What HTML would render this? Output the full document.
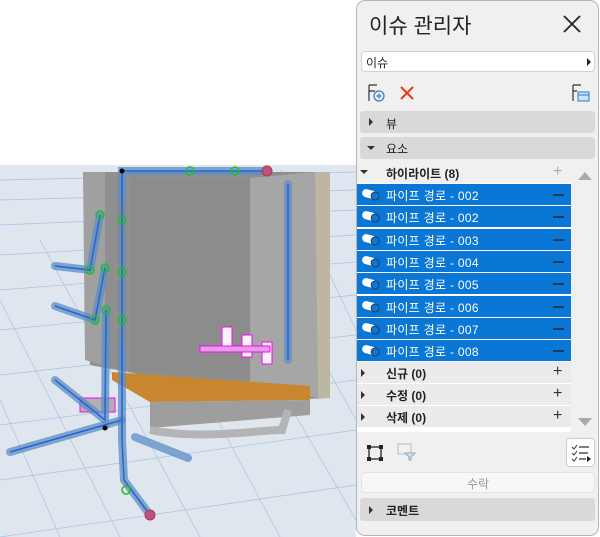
<!DOCTYPE html>
<html><head><meta charset="utf-8"><style>
*{margin:0;padding:0;box-sizing:border-box}
body{width:600px;height:537px;overflow:hidden;position:relative;background:#fff;font-family:"Liberation Sans","Noto Sans CJK KR",sans-serif}
.abs{position:absolute}
#panel{left:356px;top:0;width:243px;height:536px;background:#f0f0f0;border:1px solid #b5b5b5;border-radius:9px}
.t{position:absolute;white-space:nowrap}
.hdr{position:absolute;left:360px;width:235px;background:#d9d9d9;border-radius:3px;height:22px;font-size:12px;color:#222}
.row{position:absolute;left:357px;width:214px;height:21px;background:#0a77d6;color:#fff;font-size:12px}
.row .n{position:absolute;left:29px;top:3px;letter-spacing:.3px}
.row .m{position:absolute;left:196px;top:10px;width:11px;height:2px;background:#1d3c5c}
.pi{position:absolute;left:5px;top:6px;width:15px;height:8px;background:#fff;border-radius:4px;transform:rotate(15deg)}
.pi:after{content:"";position:absolute;right:-3px;top:0;width:7px;height:7px;border:1.5px solid #1d3c5c;border-radius:50%;background:#0a77d6}
.g{position:absolute;left:357px;width:214px;height:21px;background:#ebebeb;font-size:12px;font-weight:bold;color:#222}
.plus{position:absolute;left:196px;top:4px;font-size:16px;font-weight:normal;line-height:12px;color:#333}
.tri{position:absolute;width:0;height:0}
</style></head><body>
<svg class="abs" style="left:0;top:0" width="356" height="537">
<rect x="0" y="165" width="356" height="372" fill="#dfe6ee"/>
<g stroke="#a9c0e6" stroke-width="0.7" fill="none">
<path d="M0 180 L356 172 M0 200 L356 190 M0 225 L356 210 M0 255 L356 235 M0 290 L356 262 M0 330 L356 295 M0 375 L356 335 M0 425 L356 380 M0 480 L356 430 M0 537 L356 485"/>
<path d="M0 300 L120 537 M40 240 L200 537 M100 200 L280 537 M160 180 L356 520 M220 175 L356 420 M0 400 L60 537 M280 170 L356 330"/>
</g>
<polygon points="83,172 330,172 330,398 280,400 90,365" fill="#8f8f8f"/>
<polygon points="83,172 105,172 105,366 85,360" fill="#a0a0a0"/>
<polygon points="130,178 250,178 250,380 130,372" fill="#8c8c8c"/>
<polygon points="250,178 315,172 318,398 250,390" fill="#a6a6a6"/>
<polygon points="315,172 330,172 330,398 318,398" fill="#bdb6a3"/>
<polygon points="112,372 310,386 310,400 150,402 112,380" fill="#c8862f"/>
<polygon points="150,402 310,400 310,415 150,428" fill="#9e9e9e"/>
<path d="M150 430 C200 440 260 430 282 430 L288 410" stroke="#b4b4b8" stroke-width="8" fill="none"/>
<rect x="222" y="327" width="10" height="22" fill="#f4f4f4" stroke="#f0f" stroke-width="1"/>
<rect x="242" y="335" width="10" height="22" fill="#f4f4f4" stroke="#f0f" stroke-width="1"/>
<rect x="262" y="342" width="10" height="22" fill="#f4f4f4" stroke="#f0f" stroke-width="1"/>
<rect x="200" y="346" width="70" height="6" fill="#e0a0e0" stroke="#f0f" stroke-width="1"/>
<rect x="80" y="398" width="35" height="14" fill="#b0b0b0" stroke="#f0f" stroke-width="1"/>
<g stroke="#c88a3a" stroke-width="7"><path d="M122 200 V340"/></g>
<g stroke="#5a8fc6" stroke-opacity="0.75" stroke-width="8" fill="none" stroke-linecap="round">
<path d="M267 171 H122 V440 L124 480 L150 515"/>
<path d="M122 420 L10 452"/>
<path d="M135 437 L188 458"/>
<path d="M100 215 L90 270 L55 266"/>
<path d="M105 268 L95 320 L55 306"/>
<path d="M106 310 L105 420 L55 380"/>
<path d="M288 184 V360"/>
</g>
<g stroke="#2f5fd0" stroke-width="1.5" fill="none">
<path d="M267 171 H122 V440 L124 480 L150 515 M122 420 L10 452 M100 215 L90 270 L55 266 M105 268 L95 320 L55 306 M106 310 L105 420 L55 380 M288 184 V360"/>
</g>
<g fill="none" stroke="#1fc21f" stroke-width="1.5">
<circle cx="100" cy="215" r="4"/><circle cx="90" cy="270" r="4"/><circle cx="105" cy="268" r="4"/><circle cx="95" cy="320" r="4"/><circle cx="106" cy="310" r="4"/><circle cx="122" cy="220" r="4"/><circle cx="122" cy="272" r="4"/><circle cx="122" cy="320" r="4"/><circle cx="235" cy="171" r="4"/><circle cx="190" cy="171" r="4"/><circle cx="126" cy="490" r="4"/>
</g>
<circle cx="267" cy="171" r="5" fill="#c05080" stroke="#a04040"/>
<circle cx="150" cy="515" r="5" fill="#c05080" stroke="#a04040"/>
<circle cx="122" cy="171" r="2.5" fill="#000"/><circle cx="105" cy="428" r="2.5" fill="#000"/>
<rect x="0" y="0" width="356" height="165" fill="#fff"/>
</svg>

<div class="abs" id="panel"></div>
<div class="t" style="left:369px;top:10px;font-size:21px;color:#222">이슈 관리자</div>
<svg class="abs" style="left:562px;top:14px" width="20" height="20"><path d="M2 2L18 18M18 2L2 18" stroke="#222" stroke-width="1.8"/></svg>
<div class="abs" style="left:361px;top:51px;width:234px;height:21px;background:#fff;border:1px solid #d2d2d2;border-radius:4px"></div>
<div class="t" style="left:366px;top:54px;font-size:12px;color:#222">이슈</div>
<div class="tri" style="left:587px;top:58px;border-left:4px solid #222;border-top:4px solid transparent;border-bottom:4px solid transparent"></div>
<svg class="abs" style="left:367px;top:83px" width="20" height="20"><path d="M2 2V18M2 2H10M2 8H8" stroke="#333" stroke-width="1.2" fill="none"/><circle cx="12" cy="13" r="5" fill="none" stroke="#2a7ad0" stroke-width="1.2"/><path d="M9.5 13H14.5M12 10.5V15.5" stroke="#2a7ad0" stroke-width="1.2"/></svg>
<svg class="abs" style="left:400px;top:86px" width="14" height="14"><path d="M1 1L13 13M13 1L1 13" stroke="#e8381c" stroke-width="2"/></svg>
<svg class="abs" style="left:571px;top:83px" width="20" height="20"><path d="M2 2V18M2 2H10M2 8H6" stroke="#333" stroke-width="1.2" fill="none"/><rect x="7" y="9" width="11" height="9" fill="#cfe3f7" stroke="#2a7ad0"/><path d="M7 12H18" stroke="#2a7ad0"/></svg>

<div class="hdr" style="top:111px"><div class="tri" style="left:9px;top:7px;border-left:4px solid #333;border-top:4px solid transparent;border-bottom:4px solid transparent"></div><span class="t" style="left:26px;top:4px">뷰</span></div>
<div class="hdr" style="top:137px"><div class="tri" style="left:7px;top:9px;border-top:4px solid #333;border-left:4px solid transparent;border-right:4px solid transparent"></div><span class="t" style="left:26px;top:3px">요소</span></div>

<div class="abs" style="left:357px;top:162px;width:214px;height:270px;background:#fff"></div>
<div class="g" style="top:162px;background:#f0f0f0"><div class="tri" style="left:3px;top:8px;border-top:4px solid #333;border-left:4px solid transparent;border-right:4px solid transparent"></div><span class="t" style="left:29px;top:3px">하이라이트 (8)</span><span class="plus" style="color:#aaa">+</span></div>

<div class="row" style="top:184px"><div class="pi"></div><span class="n">파이프 경로 - 002</span><div class="m"></div></div>
<div class="row" style="top:206px"><div class="pi"></div><span class="n">파이프 경로 - 002</span><div class="m"></div></div>
<div class="row" style="top:228.5px"><div class="pi"></div><span class="n">파이프 경로 - 003</span><div class="m"></div></div>
<div class="row" style="top:251px"><div class="pi"></div><span class="n">파이프 경로 - 004</span><div class="m"></div></div>
<div class="row" style="top:273px"><div class="pi"></div><span class="n">파이프 경로 - 005</span><div class="m"></div></div>
<div class="row" style="top:295.5px"><div class="pi"></div><span class="n">파이프 경로 - 006</span><div class="m"></div></div>
<div class="row" style="top:317.5px"><div class="pi"></div><span class="n">파이프 경로 - 007</span><div class="m"></div></div>
<div class="row" style="top:340px"><div class="pi"></div><span class="n">파이프 경로 - 008</span><div class="m"></div></div>

<div class="g" style="top:362px"><div class="tri" style="left:4px;top:7px;border-left:4px solid #333;border-top:4px solid transparent;border-bottom:4px solid transparent"></div><span class="t" style="left:29px;top:3px">신규 (0)</span><span class="plus">+</span></div>
<div class="g" style="top:384px"><div class="tri" style="left:4px;top:7px;border-left:4px solid #333;border-top:4px solid transparent;border-bottom:4px solid transparent"></div><span class="t" style="left:29px;top:3px">수정 (0)</span><span class="plus">+</span></div>
<div class="g" style="top:406px"><div class="tri" style="left:4px;top:7px;border-left:4px solid #333;border-top:4px solid transparent;border-bottom:4px solid transparent"></div><span class="t" style="left:29px;top:3px">삭제 (0)</span><span class="plus">+</span></div>

<div class="tri" style="left:578px;top:172px;border-bottom:8px solid #aaa;border-left:7px solid transparent;border-right:7px solid transparent"></div>
<div class="tri" style="left:578px;top:418px;border-top:8px solid #aaa;border-left:7px solid transparent;border-right:7px solid transparent"></div>

<svg class="abs" style="left:366px;top:444px" width="18" height="18"><rect x="3" y="3" width="12" height="12" fill="none" stroke="#222" stroke-width="1.3"/><g fill="#222"><rect x="1" y="1" width="4" height="4"/><rect x="13" y="1" width="4" height="4"/><rect x="1" y="13" width="4" height="4"/><rect x="13" y="13" width="4" height="4"/></g></svg>
<svg class="abs" style="left:397px;top:443px" width="20" height="18"><rect x="1" y="1" width="13" height="10" fill="none" stroke="#bbb"/><path d="M8 10H18L14 14V17H12V14Z" fill="#cfe0f5" stroke="#9ab"/></svg>
<div class="abs" style="left:566px;top:438px;width:29px;height:29px;background:#fff;border:1px solid #ccc;border-radius:4px"></div>
<svg class="abs" style="left:570px;top:443px" width="22" height="20"><path d="M2 4l2 2 3-4M2 10l2 2 3-4M2 16l2 2 3-4" stroke="#333" fill="none"/><path d="M9 4H19M9 10H18M9 16H16" stroke="#333" stroke-width="1.3"/><path d="M17 13l4 3-4 3z" fill="#222"/></svg>
<div class="abs" style="left:361px;top:472px;width:234px;height:21px;background:#f7f7f7;border:1px solid #e3e3e3;border-radius:4px"></div>
<div class="t" style="left:467px;top:475px;font-size:12px;color:#999">수락</div>
<div class="hdr" style="top:498px;height:23px"><div class="tri" style="left:9px;top:8px;border-left:4px solid #333;border-top:4px solid transparent;border-bottom:4px solid transparent"></div><span class="t" style="left:26px;top:4px;font-weight:bold">코멘트</span></div>
</body></html>
